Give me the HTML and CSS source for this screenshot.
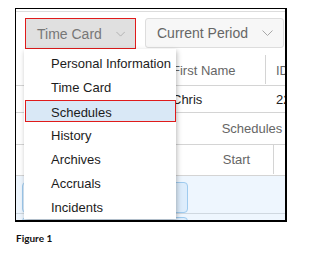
FILE: index.html
```html
<!DOCTYPE html>
<html lang="en">
<head>
    <meta charset="UTF-8">
    <title>Figure 1</title>
    <link rel="stylesheet" href="styles.css">
</head>
<body>

    <div class="frame">
        <div class="top-strip"></div>

        <div class="toolbar">
            <button class="select select-active">
                <span>Time Card</span>
                <svg class="chevron" width="11" height="6" viewBox="0 0 11 6"><polyline points="0.5,0.5 5.5,5.5 10.5,0.5"/></svg>
            </button>
            <button class="select">
                <span>Current Period</span>
                <svg class="chevron" width="11" height="6" viewBox="0 0 11 6"><polyline points="0.5,0.5 5.5,5.5 10.5,0.5"/></svg>
            </button>
        </div>

        <div class="table">
            <div class="row row-head">
                <div class="cell cell-lead"></div>
                <div class="cell cell-name divider">First Name</div>
                <div class="cell cell-id">ID</div>
            </div>
            <div class="row row-data">
                <div class="cell cell-lead"></div>
                <div class="cell cell-name dark">Chris</div>
                <div class="cell cell-id dark">22</div>
            </div>
            <div class="row row-group">
                <div class="cell cell-lead"></div>
                <div class="cell cell-span">Schedules</div>
            </div>
            <div class="row row-sub">
                <div class="cell cell-pre"></div>
                <div class="cell cell-start divider">Start</div>
                <div class="cell"></div>
            </div>
            <div class="row row-shift">
                <div class="shift-box"></div>
            </div>
            <div class="row row-shift">
                <div class="shift-box"></div>
            </div>
        </div>

        <!-- open dropdown of the Time Card select -->
        <ul class="menu">
            <li class="menu-item">Personal Information</li>
            <li class="menu-item">Time Card</li>
            <li class="menu-item active">Schedules</li>
            <li class="menu-item">History</li>
            <li class="menu-item">Archives</li>
            <li class="menu-item">Accruals</li>
            <li class="menu-item">Incidents</li>
        </ul>
    </div>

    <p class="caption">Figure 1</p>

</body>
</html>
```

FILE: styles.css
```css
/* --- Basic Setup --- */
body {
    margin: 0;
    padding: 8px 0 0 15px;
    background-color: #ffffff;
    font-family: "Liberation Sans", Arial, sans-serif;
}

/* --- Screenshot Frame --- */
.frame {
    position: relative;
    width: 269px;
    height: 211px;
    border-style: solid;
    border-color: #000000;
    border-width: 1px 2px 2px 1px;
    background-color: #ffffff;
    overflow: hidden;
}

.top-strip {
    height: 2px;
    border-bottom: 1px solid #dcdcdc;
}

/* --- Select Buttons --- */
.toolbar {
    display: flex;
    align-items: flex-start;
    gap: 9px;
    margin-top: 6px;
    padding-left: 9px;
}

.select {
    display: flex;
    align-items: center;
    justify-content: space-between;
    gap: 14px;
    height: 30px;
    padding: 0 10px 0 11px;
    border: 1px solid #dddddd;
    border-radius: 3px;
    background-color: #f7f7f7;
    color: #666666;
    font-family: inherit;
    font-size: 14px;
    white-space: nowrap;
    flex-shrink: 0;
    box-sizing: border-box;
}

.select-active {
    height: 31px;
    width: 111px;
    padding-right: 10px;
    border-color: #e01b1b;
    border-radius: 0;
    background-color: #e0e0e0;
    color: #777777;
}

.chevron polyline {
    fill: none;
    stroke: #a8a8a8;
    stroke-width: 1;
}

/* --- Table behind the menu --- */
.table {
    margin-top: 6px;
    font-size: 13px;
    color: #666666;
}

.row {
    display: flex;
    border-bottom: 1px solid #d4d4d4;
}

.cell {
    display: flex;
    align-items: center;
    white-space: nowrap;
    box-sizing: border-box;
}

.row-head  { height: 30px; }
.row-data  { height: 26px; }
.row-group { height: 31px; }
.row-sub   { height: 30px; }

.row-head .cell { height: 29px; padding-top: 1px; }
.row-sub .cell { height: 29px; }

.divider { border-right: 1px solid #d4d4d4; }
.dark { color: #222222; }

.cell-lead { width: 148px; flex-shrink: 0; }
.cell-name { width: 102px; padding-left: 8px; flex-shrink: 0; }
.cell-id   { padding-left: 10px; }
.cell-span { width: 176px; justify-content: center; flex-shrink: 0; }
.cell-pre  { width: 184px; flex-shrink: 0; }
.cell-start { width: 74px; justify-content: center; flex-shrink: 0; }

.row-shift {
    height: 38px;
    padding: 6px 0 0 6px;
    background-color: #eef6fe;
    box-sizing: border-box;
    border-bottom-color: #cfd8e0;
}
.row-shift + .row-shift { height: 40px; padding-top: 3px; }

.shift-box {
    width: 166px;
    height: 31px;
    border: 1px solid #9fcbef;
    border-radius: 4px;
    background-color: #ddedfc;
    box-sizing: border-box;
}

/* --- Dropdown Menu --- */
.menu {
    position: absolute;
    left: 8px;
    top: 40px;
    width: 152px;
    margin: 0;
    padding: 1px 0;
    list-style: none;
    background-color: #ffffff;
    box-shadow: 1px 2px 5px rgba(0, 0, 0, 0.28);
    font-size: 13px;
    color: #1c1c1c;
}

.menu-item {
    height: 24px;
    padding: 4px 0 0 27px;
    line-height: 20px;
    white-space: nowrap;
    box-sizing: border-box;
}

.menu-item.active {
    height: 22px;
    margin: 2px 0 0 1px;
    padding: 2px 0 0 25px;
    line-height: 19px;
    border: 1px solid #e01b1b;
    background-color: #d9e8f6;
}

/* --- Caption --- */
.caption {
    margin: 10px 0 0 1px;
    font-family: Lato, "Liberation Sans", sans-serif;
    font-weight: 700;
    font-size: 10px;
    color: #111111;
}
```
